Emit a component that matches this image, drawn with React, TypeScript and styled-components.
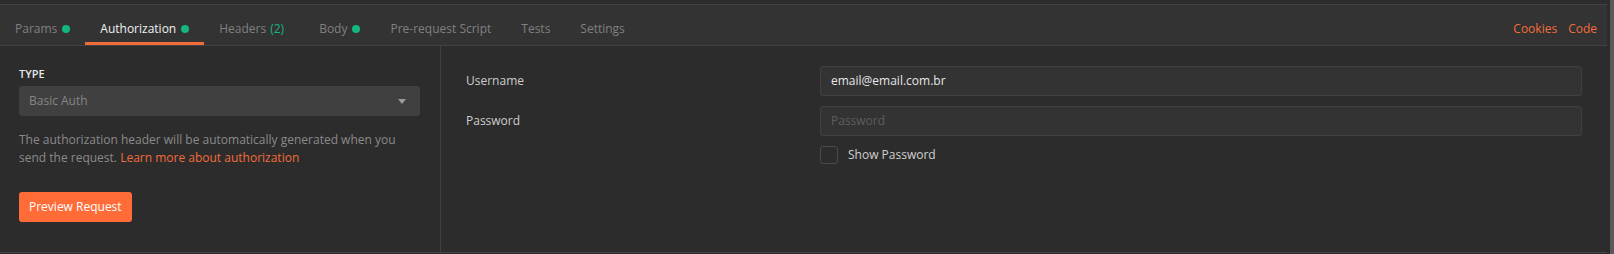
import React from "react";
import styled, { createGlobalStyle } from "styled-components";

const GlobalStyle = createGlobalStyle`
  * { box-sizing: border-box; }
  html, body { margin: 0; padding: 0; background: #2c2c2c; }
  body { font-family: "Open Sans", "Liberation Sans", sans-serif; font-size: 12px; }
`;

const Shell = styled.div`
  display: flex;
  width: 1614px;
  height: 254px;
  background: #2c2c2c;
`;

const Main = styled.div`
  flex: 1;
  display: flex;
  flex-direction: column;
  padding-top: 4px;
  min-width: 0;
`;

const ScrollTrack = styled.div`
  width: 7px;
  display: flex;
  justify-content: flex-end;
`;

const ScrollThumb = styled.div`
  width: 4px;
  background: #5a5a5a;
`;

const TabBar = styled.div`
  display: flex;
  align-items: stretch;
  height: 42px;
  background: #333333;
  border-top: 1px solid #424242;
  border-bottom: 1px solid #424242;
  padding-right: 10px;
`;

const Tabs = styled.div`
  display: flex;
  flex: 1;
`;

const Tab = styled.div<{ $active?: boolean }>`
  display: flex;
  align-items: flex-start;
  height: 40px;
  padding: 16px 15px 0;
  line-height: 16px;
  color: ${(p) => (p.$active ? "#f0f0f0" : "#808080")};
  border-bottom: 3px solid ${(p) => (p.$active ? "#f26b3a" : "transparent")};
  white-space: nowrap;
`;

const Dot = styled.span`
  width: 8px;
  height: 8px;
  border-radius: 50%;
  background: #12b67e;
  margin: 4px 0 0 5px;
`;

const Count = styled.span`
  color: #12b67e;
  margin: 0 5px 0 4px;
`;

const Actions = styled.div`
  display: flex;
  gap: 11px;
  padding-top: 16px;
  line-height: 16px;
`;

const ActionLink = styled.span`
  color: #f26b3a;
`;

const Body = styled.div`
  flex: 1;
  display: flex;
  border-bottom: 1px solid #444444;
  margin-bottom: 1px;
`;

const LeftPanel = styled.div`
  width: 441px;
  flex: none;
  border-right: 1px solid #3e3e3e;
  padding: 20px 20px 0 19px;
  display: flex;
  flex-direction: column;
  align-items: flex-start;
`;

const TypeLabel = styled.div`
  font-size: 11px;
  font-weight: 600;
  line-height: 16px;
  color: #e6e6e6;
`;

const Select = styled.div`
  margin-top: 4px;
  width: 100%;
  height: 30px;
  background: #404040;
  border-radius: 3px;
  display: flex;
  align-items: center;
  justify-content: space-between;
  padding: 0 14px 0 10px;
  color: #858585;
  line-height: 16px;
`;

const Caret = styled.span`
  width: 0;
  height: 0;
  border-left: 4px solid transparent;
  border-right: 4px solid transparent;
  border-top: 5px solid #9a9a9a;
`;

const Description = styled.p`
  margin: 15px 0 0;
  line-height: 18px;
  color: #8a8a8a;
`;

const InlineLink = styled.span`
  color: #f26b3a;
`;

const PrimaryButton = styled.button`
  margin-top: 25px;
  height: 30px;
  padding: 0 10px;
  border: none;
  border-radius: 3px;
  background: #ff6c37;
  color: #ffffff;
  font-family: inherit;
  font-size: 12px;
  line-height: 16px;
`;

const RightPanel = styled.div`
  flex: 1;
  padding: 20px 25px 0 25px;
  display: grid;
  grid-template-columns: 354px 1fr;
  grid-auto-rows: min-content;
  row-gap: 10px;
  align-items: center;
`;

const FieldLabel = styled.div`
  color: #cccccc;
  line-height: 16px;
`;

const Input = styled.div<{ $placeholder?: boolean }>`
  height: 30px;
  display: flex;
  align-items: center;
  padding: 0 10px;
  background: #333333;
  border: 1px solid #404040;
  border-radius: 3px;
  color: ${(p) => (p.$placeholder ? "#5e5e5e" : "#e6e6e6")};
  line-height: 16px;
`;

const CheckRow = styled.label`
  grid-column: 2;
  display: flex;
  align-items: center;
  gap: 10px;
  color: #d0d0d0;
  line-height: 16px;
`;

const CheckBox = styled.span`
  width: 18px;
  height: 18px;
  border: 1px solid #4a4a4a;
  border-radius: 3px;
`;

export default function App() {
  return (
    <>
      <GlobalStyle />
      <Shell>
        <Main>
          <TabBar>
            <Tabs>
              <Tab>
                Params<Dot />
              </Tab>
              <Tab $active>
                Authorization<Dot />
              </Tab>
              <Tab>
                Headers<Count>(2)</Count>
              </Tab>
              <Tab>
                Body<Dot />
              </Tab>
              <Tab>Pre-request Script</Tab>
              <Tab>Tests</Tab>
              <Tab>Settings</Tab>
            </Tabs>
            <Actions>
              <ActionLink>Cookies</ActionLink>
              <ActionLink>Code</ActionLink>
            </Actions>
          </TabBar>
          <Body>
            <LeftPanel>
              <TypeLabel>TYPE</TypeLabel>
              <Select>
                <span>Basic Auth</span>
                <Caret />
              </Select>
              <Description>
                The authorization header will be automatically generated when you send the request.{" "}
                <InlineLink>Learn more about authorization</InlineLink>
              </Description>
              <PrimaryButton>Preview Request</PrimaryButton>
            </LeftPanel>
            <RightPanel>
              <FieldLabel>Username</FieldLabel>
              <Input>email@email.com.br</Input>
              <FieldLabel>Password</FieldLabel>
              <Input $placeholder>Password</Input>
              <CheckRow>
                <CheckBox />
                Show Password
              </CheckRow>
            </RightPanel>
          </Body>
        </Main>
        <ScrollTrack>
          <ScrollThumb />
        </ScrollTrack>
      </Shell>
    </>
  );
}
